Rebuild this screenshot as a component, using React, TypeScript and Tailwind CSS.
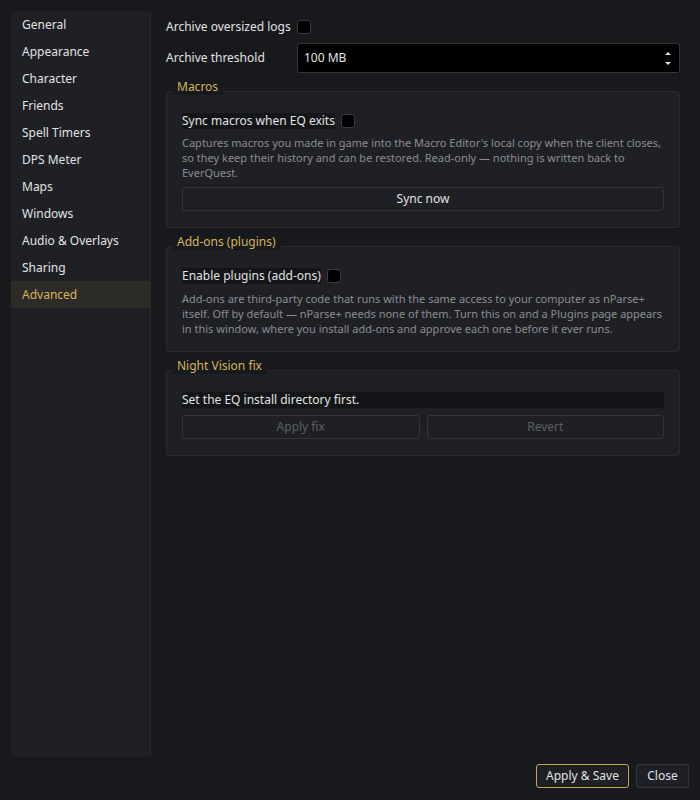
const font = { fontFamily: '"Noto Sans", "Open Sans", sans-serif' };

const pages = [
  "General",
  "Appearance",
  "Character",
  "Friends",
  "Spell Timers",
  "DPS Meter",
  "Maps",
  "Windows",
  "Audio & Overlays",
  "Sharing",
  "Advanced",
];

function Check() {
  return (
    <span className="inline-block h-[14px] w-[14px] shrink-0 rounded-[3px] border border-[#3a3b40] bg-black" />
  );
}

function Group({
  title,
  pb,
  children,
}: {
  title: string;
  pb: string;
  children: React.ReactNode;
}) {
  return (
    <div className="flex flex-col">
      <div className="relative z-10 flex h-4 items-center">
        <span className="ml-[6px] bg-[#18191d] px-[5px] leading-4 text-[#d6b35a]">{title}</span>
      </div>
      <div className={"-mt-1 rounded-[3px] border border-[#2d2b27] bg-[#1f2025] px-[15px] pt-[21px] " + pb}>
        {children}
      </div>
    </div>
  );
}

function Btn({ children, disabled }: { children: React.ReactNode; disabled?: boolean }) {
  return (
    <button
      type="button"
      className={
        "h-6 flex-1 rounded-[3px] border border-[#34353a] bg-[#1f2025] text-[12px] " +
        (disabled ? "text-[#5c5e64]" : "text-[#e2e2e4]")
      }
    >
      {children}
    </button>
  );
}

export default function App() {
  return (
    <div
      className="flex h-[800px] w-[700px] flex-col bg-[#18191d] text-[12px] text-[#e2e2e4]"
      style={font}
    >
      <div className="flex min-h-0 flex-1 pt-[11px] pl-[11px]">
        <div className="flex w-[140px] flex-col rounded-[3px] border-r border-[#2b2820] bg-[#1f2025]">
          {pages.map((p) => (
            <div
              key={p}
              className={
                "flex h-[27px] items-center pl-[11px] " +
                (p === "Advanced" ? "bg-[#2d2b27] text-[#d6b35a]" : "")
              }
            >
              {p}
            </div>
          ))}
        </div>

        <div className="ml-[15px] flex w-[514px] flex-col pt-[7px]">
          <div className="flex h-[18px] items-center gap-[6px]">
            <span>Archive oversized logs</span>
            <Check />
          </div>
          <div className="mt-[7px] flex h-[30px] items-center">
            <span className="w-[131px]">Archive threshold</span>
            <div className="flex h-full flex-1 items-center justify-between rounded-[3px] border border-[#35363b] bg-black pr-[8px] pl-[6px]">
              <span>100 MB</span>
              <div className="flex flex-col gap-[7px]">
                <svg width="6" height="3" viewBox="0 0 6 3">
                  <path d="M0 3 L3 0 L6 3 Z" fill="#e2e2e4" />
                </svg>
                <svg width="6" height="3" viewBox="0 0 6 3">
                  <path d="M0 0 L3 3 L6 0 Z" fill="#e2e2e4" />
                </svg>
              </div>
            </div>
          </div>

          <div className="mt-[6px] flex flex-col gap-[6px]">
            <Group title="Macros" pb="pb-[16px]">
              <div className="flex h-4 items-center gap-[6px]">
                <span className="bg-[#141519] leading-4">Sync macros when EQ exits</span>
                <Check />
              </div>
              <p className="mt-[6px] text-[11px] leading-[15px] text-[#8a8c93]">
                Captures macros you made in game into the Macro Editor's local copy when the client closes,
                so they keep their history and can be restored. Read-only — nothing is written back to
                EverQuest.
              </p>
              <div className="mt-[7px] flex">
                <Btn>Sync now</Btn>
              </div>
            </Group>

            <Group title="Add-ons (plugins)" pb="pb-[15px]">
              <div className="flex h-4 items-center gap-[6px]">
                <span className="bg-[#141519] leading-4">Enable plugins (add-ons)</span>
                <Check />
              </div>
              <p className="mt-[7px] text-[11px] leading-[15px] text-[#8a8c93]">
                Add-ons are third-party code that runs with the same access to your computer as nParse+
                itself. Off by default — nParse+ needs none of them. Turn this on and a Plugins page appears
                in this window, where you install add-ons and approve each one before it ever runs.
              </p>
            </Group>

            <Group title="Night Vision fix" pb="pb-[16px]">
              <div className="flex h-4 items-center bg-[#141519] leading-4">
                Set the EQ install directory first.
              </div>
              <div className="mt-[7px] flex gap-[7px]">
                <Btn disabled>Apply fix</Btn>
                <Btn disabled>Revert</Btn>
              </div>
            </Group>
          </div>
        </div>
      </div>

      <div className="flex justify-end gap-[7px] pt-[7px] pr-[11px] pb-[12px]">
        <button
          type="button"
          className="h-6 w-[93px] rounded-[3px] border border-[#c9a345] bg-[#1f2025] text-[12px] text-[#e2e2e4]"
        >
          Apply &amp; Save
        </button>
        <button
          type="button"
          className="h-6 w-[53px] rounded-[3px] border border-[#34353a] bg-[#1f2025] text-[12px] text-[#e2e2e4]"
        >
          Close
        </button>
      </div>
    </div>
  );
}
